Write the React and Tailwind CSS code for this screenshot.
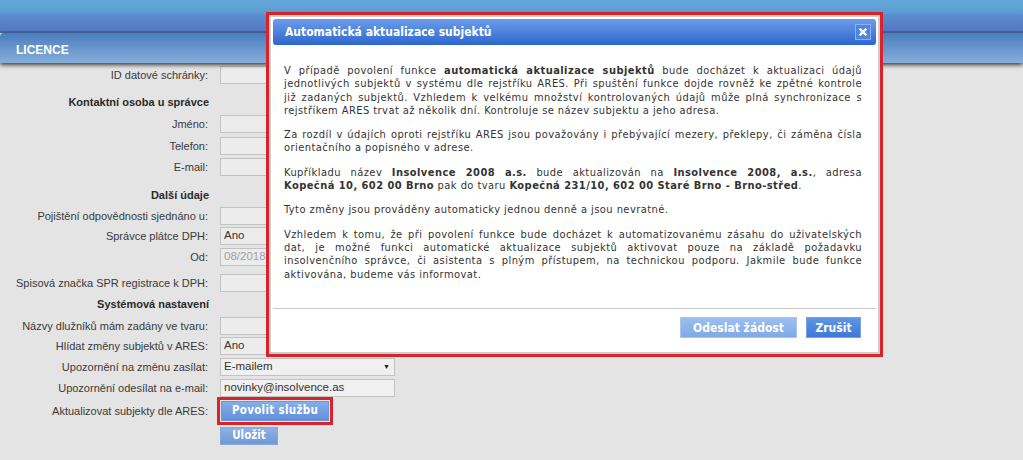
import React from 'react';

const LABEL = "w-[208px] shrink-0 text-right text-[11px] leading-[14px] text-[#3a3a3a]";
const FIELD = "ml-[12px] h-[18px] w-[175px] border border-[#c2c2c2] px-[3px] flex items-center text-[11.5px]";

const Row = ({ label, className, children }) => (
  <div className={`flex items-center h-[18px] ${className}`}>
    <div className={LABEL}>{label}</div>
    {children}
  </div>
);

const Heading = ({ children, className }) => (
  <div className={`flex h-[14px] items-center ${className}`}>
    <div className="w-[209px] text-right text-[11px] font-bold leading-[14px] text-[#2a2a2a]">{children}</div>
  </div>
);

const Line = ({ children }) => (
  <div className="text-justify [text-align-last:justify]">{children}</div>
);

const App = () => {
  return (
    <div className="relative h-[460px] w-[1023px] overflow-hidden bg-[#e4e4e4] [font-family:'Liberation_Sans',Arial,sans-serif]">
      {/* Header */}
      <div className="relative z-10">
        <div className="h-[14px] bg-gradient-to-b from-[#63a8d8] to-[#5a9bd1]" />
        <div className="h-[17px] bg-gradient-to-b from-[#5a8ed0] to-[#5676c4]" />
        <div className="h-[2px] bg-[#44679f]" />
        <div className="flex h-[30px] items-center rounded-tl-[4px] bg-gradient-to-b from-[#4a7cbe] to-[#86aed9] pl-[16px] pt-[4px] shadow-[0_2px_4px_rgba(0,0,0,0.75)]">
          <span className="text-[12px] font-bold text-white">LICENCE</span>
        </div>
      </div>

      {/* Form */}
      <div className="flex flex-col">
        <Row label="ID datové schránky:" className="mt-[3px]"><div className={`${FIELD} bg-[#ececec]`} /></Row>
        <Heading className="mt-[11px]">Kontaktní osoba u správce</Heading>
        <Row label="Jméno:" className="mt-[6px]"><div className={`${FIELD} bg-[#ececec]`} /></Row>
        <Row label="Telefon:" className="mt-[4px]"><div className={`${FIELD} bg-[#ececec]`} /></Row>
        <Row label="E-mail:" className="mt-[3px]"><div className={`${FIELD} bg-[#ececec]`} /></Row>
        <Heading className="mt-[12px]">Další údaje</Heading>
        <Row label="Pojištění odpovědnosti sjednáno u:" className="mt-[5px]"><div className={`${FIELD} bg-[#ececec]`} /></Row>
        <Row label="Správce plátce DPH:" className="mt-[2px]"><div className={`${FIELD} bg-[#ececec] text-[#333]`}>Ano</div></Row>
        <Row label="Od:" className="mt-[3px]"><div className={`${FIELD} bg-[#ececec] text-[#a0a0a0]`}>08/2018</div></Row>
        <Row label="Spisová značka SPR registrace k DPH:" className="mt-[8px]"><div className={`${FIELD} bg-[#ececec]`} /></Row>
        <Heading className="mt-[5px]">Systémová nastavení</Heading>
        <Row label="Názvy dlužníků mám zadány ve tvaru:" className="mt-[6px]"><div className={`${FIELD} bg-[#ececec]`} /></Row>
        <Row label="Hlídat změny subjektů v ARES:" className="mt-[2px]"><div className={`${FIELD} bg-[#ececec] text-[#333]`}>Ano</div></Row>
        <Row label="Upozornění na změnu zasílat:" className="mt-[3px]">
          <div className={`${FIELD} justify-between bg-[#f0f0f0] text-[#333]`}>
            <span>E-mailem</span>
            <span className="mr-[1px] text-[7px] text-[#222]">▼</span>
          </div>
        </Row>
        <Row label="Upozornění odesílat na e-mail:" className="mt-[3px]">
          <div className={`${FIELD} bg-[#f0f0f0] text-[#333]`}>novinky@insolvence.as</div>
        </Row>
        <div className="flex h-[28px] items-center">
          <div className={LABEL}>Aktualizovat subjekty dle ARES:</div>
          <div className="ml-[9px] border-[3px] border-[#d8232a] p-[1px]">
            <button className="flex h-[20px] w-[108px] items-center justify-center border border-[#6a97dc] bg-gradient-to-b from-[#86afea] to-[#5f8fd8] text-[11.5px] font-bold tracking-[0.3px] text-white [font-family:'DejaVu_Sans_Condensed','DejaVu_Sans',sans-serif]">
              Povolit službu
            </button>
          </div>
        </div>
        <div className="mt-[2px] flex">
          <div className="w-[208px] shrink-0" />
          <button className="ml-[12px] flex h-[18px] w-[58px] items-center justify-center border border-[#86a8dc] bg-gradient-to-b from-[#8fb1e3] to-[#6f98d6] text-[11.5px] font-bold text-white [font-family:'DejaVu_Sans_Condensed','DejaVu_Sans',sans-serif]">
            Uložit
          </button>
        </div>
      </div>

      {/* Dialog (highlighted) */}
      <div className="absolute left-[266px] top-[12px] z-20 h-[345px] w-[617px] border-[3px] border-[#d8232a]">
        <div className="flex h-full flex-col border-2 border-[#cdcdcd] bg-white p-[2px] [font-family:'DejaVu_Sans_Condensed','DejaVu_Sans',sans-serif]">
          <div className="flex h-[26px] shrink-0 items-center justify-between rounded-[3px] bg-gradient-to-b from-[#6c9deb] to-[#2d66ce] pl-[12px] pr-[5px]">
            <span className="text-[12px] font-bold text-white">Automatická aktualizace subjektů</span>
            <div className="flex h-[16px] w-[16px] items-center justify-center border border-[#8db0ee] bg-[#4f85de]">
              <svg width="8" height="8" viewBox="0 0 8 8">
                <path d="M1.5 1.5 L6.5 6.5 M6.5 1.5 L1.5 6.5" stroke="white" strokeWidth="2.4" strokeLinecap="square" />
              </svg>
            </div>
          </div>

          <div className="flex flex-1 flex-col gap-[11px] pl-[11px] pr-[14px] pt-[19px] text-[11px] leading-[13.3px] tracking-[0.45px] text-[#333]">
            <div>
              <Line>V případě povolení funkce <b>automatická aktualizace subjektů</b> bude docházet k aktualizaci údajů</Line>
              <Line>jednotlivých subjektů v systému dle rejstříku ARES. Při spuštění funkce dojde rovněž ke zpětné kontrole</Line>
              <Line>již zadaných subjektů. Vzhledem k velkému množství kontrolovaných údajů může plná synchronizace s</Line>
              <div>rejstříkem ARES trvat až několik dní. Kontroluje se název subjektu a jeho adresa.</div>
            </div>
            <div>
              <Line>Za rozdíl v údajích oproti rejstříku ARES jsou považovány i přebývající mezery, překlepy, či záměna čísla</Line>
              <div>orientačního a popisného v adrese.</div>
            </div>
            <div>
              <Line>Kupříkladu název <b>Insolvence 2008 a.s.</b> bude aktualizován na <b>Insolvence 2008, a.s.</b>, adresa</Line>
              <div><b>Kopečná 10, 602 00 Brno</b> pak do tvaru <b>Kopečná 231/10, 602 00 Staré Brno - Brno-střed</b>.</div>
            </div>
            <div>Tyto změny jsou prováděny automaticky jednou denně a jsou nevratné.</div>
            <div>
              <Line>Vzhledem k tomu, že při povolení funkce bude docházet k automatizovanému zásahu do uživatelských</Line>
              <Line>dat, je možné funkci automatické aktualizace subjektů aktivovat pouze na základě požadavku</Line>
              <Line>insolvenčního správce, či asistenta s plným přístupem, na technickou podporu. Jakmile bude funkce</Line>
              <div>aktivována, budeme vás informovat.</div>
            </div>
          </div>

          <div className="flex h-[42px] shrink-0 items-start justify-end gap-[9px] border-t border-[#c8c8c8] pr-[15px] pt-[8px]">
            <button className="flex h-[21px] w-[117px] items-center justify-center border border-[#a9c4ef] bg-gradient-to-b from-[#9cbff0] to-[#80a9e6] text-[12px] font-bold text-white">
              Odeslat žádost
            </button>
            <button className="flex h-[21px] w-[55px] items-center justify-center border border-[#78a2e4] bg-gradient-to-b from-[#5f95e4] to-[#3f78d6] text-[12px] font-bold text-white">
              Zrušit
            </button>
          </div>
        </div>
      </div>
    </div>
  );
};

export default App;
